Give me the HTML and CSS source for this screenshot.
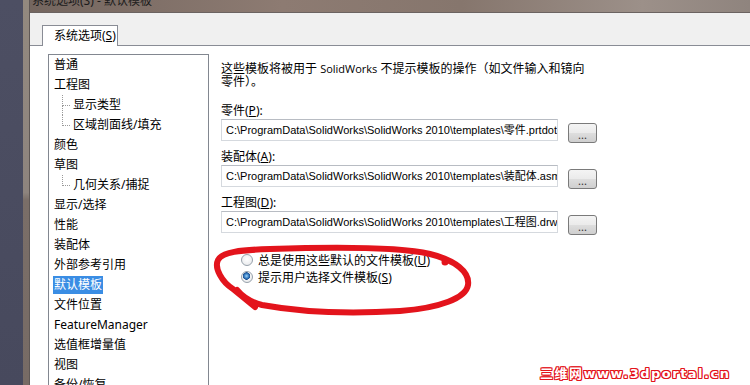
FILE: index.html
```html
<!DOCTYPE html>
<html>

<head>
    <link rel="stylesheet" href="styles.css">
</head>

<body>

    <div class="screen">
        <div class="desk"></div>
        <div class="frame"></div>

        <div class="window">
            <div class="titlebar"><span class="title">系统选项(S) - 默认模板</span></div>

            <div class="dialog">
                <div class="tabs">
                    <div class="tab">系统选项(<u>S</u>)</div>
                </div>

                <div class="panel">
                    <ul class="tree">
                        <li>普通</li>
                        <li>工程图</li>
                        <li class="sub more">显示类型</li>
                        <li class="sub">区域剖面线/填充</li>
                        <li>颜色</li>
                        <li>草图</li>
                        <li class="sub">几何关系/捕捉</li>
                        <li>显示/选择</li>
                        <li>性能</li>
                        <li>装配体</li>
                        <li>外部参考引用</li>
                        <li><span class="selected">默认模板</span></li>
                        <li>文件位置</li>
                        <li>FeatureManager</li>
                        <li>选值框增量值</li>
                        <li>视图</li>
                        <li>备份/恢复</li>
                    </ul>

                    <div class="content">
                        <p class="desc">这些模板将被用于 <span class="latin">SolidWorks</span> 不提示模板的操作（如文件输入和镜向<br>零件）。</p>

                        <div class="field first">
                            <div class="label">零件(<u>P</u>):</div>
                            <div class="row">
                                <div class="path">C:\ProgramData\SolidWorks\SolidWorks 2010\templates\零件.prtdot</div>
                                <button class="browse">...</button>
                            </div>
                        </div>
                        <div class="field">
                            <div class="label">装配体(<u>A</u>):</div>
                            <div class="row">
                                <div class="path">C:\ProgramData\SolidWorks\SolidWorks 2010\templates\装配体.asmdot</div>
                                <button class="browse">...</button>
                            </div>
                        </div>
                        <div class="field">
                            <div class="label">工程图(<u>D</u>):</div>
                            <div class="row">
                                <div class="path">C:\ProgramData\SolidWorks\SolidWorks 2010\templates\工程图.drwdot</div>
                                <button class="browse">...</button>
                            </div>
                        </div>

                        <div class="options">
                            <div class="option"><span class="radio"></span><span>总是使用这些默认的文件模板(<u>U</u>)</span></div>
                            <div class="option"><span class="radio checked"></span><span>提示用户选择文件模板(<u>S</u>)</span></div>
                        </div>
                    </div>
                </div>
            </div>
        </div>

        <svg class="scribble" width="750" height="385" viewBox="0 0 750 385">
            <path d="M 255 307 L 233 289 C 222 282, 214 268, 218 260 C 222 252, 240 250, 270 249 C 330 247, 400 247, 430 254 C 455 260, 470 272, 468 285 C 466 298, 440 308, 400 311 C 350 314, 300 312, 262 305 C 250 302, 242 296, 237 290"
                fill="none" stroke="#e3141c" stroke-width="6" stroke-linecap="round" stroke-linejoin="round" />
            <circle cx="445" cy="262" r="3.5" fill="#e3141c" />
        </svg>

        <div class="watermark">三维网www.3dportal.cn</div>
    </div>

</body>

</html>
```

FILE: styles.css
```css
body {
    margin: 0;
    font-family: "Noto Sans", "Noto Sans CJK SC", sans-serif;
    font-size: 12px;
    color: #000;
}

.screen {
    position: relative;
    display: flex;
    width: 750px;
    height: 385px;
    overflow: hidden;
}

.desk {
    width: 23px;
    background: linear-gradient(180deg, #4d4f63, #47495d);
}

.frame {
    width: 6px;
    background: linear-gradient(180deg, #93897f 0%, #8e847e 50%, #7a6e68 52%, #776b65 100%);
    border-right: 1px solid #5f5856;
}

.window {
    flex: 1;
    min-height: 0;
    display: flex;
    flex-direction: column;
    overflow: hidden;
}

.titlebar {
    flex: none;
    height: 12px;
    overflow: hidden;
    background: linear-gradient(90deg, #74665f, #8d7b72 35%, #86766d 60%, #9c9089 85%, #8f847e);
    border-bottom: 1px solid #6b6361;
}

.title {
    display: block;
    margin-top: -7px;
    padding-left: 2px;
    line-height: 16px;
    color: #1c1c1c;
}

.dialog {
    flex: 1;
    min-height: 0;
    display: flex;
    flex-direction: column;
    background-color: #f0f0f0;
    padding-top: 12px;
}

.tabs {
    flex: none;
    display: flex;
    padding-left: 12px;
}

.tab {
    position: relative;
    z-index: 1;
    width: 76px;
    height: 21px;
    margin-bottom: -1px;
    padding-left: 11px;
    box-sizing: border-box;
    line-height: 20px;
    background-color: #fff;
    border: 1px solid #898c95;
    border-bottom: none;
}

u {
    text-decoration: underline;
}

.panel {
    flex: 1;
    min-height: 0;
    display: flex;
    padding: 8px 0 0 18px;
    background-color: #fff;
    border-top: 1px solid #898c95;
}

.tree {
    flex: none;
    width: 161px;
    box-sizing: border-box;
    margin: 0;
    padding: 0;
    list-style-type: none;
    border: 1px solid #828790;
    border-bottom: none;
}

.tree li {
    position: relative;
    height: 20px;
    line-height: 20px;
    padding-left: 5px;
    white-space: nowrap;
}

.tree li.sub {
    padding-left: 24px;
}

.tree li.sub::before {
    content: "";
    position: absolute;
    left: 13px;
    top: 0;
    width: 7px;
    height: 10px;
    border-left: 1px dotted #9a9a9a;
    border-bottom: 1px dotted #9a9a9a;
}

.tree li.more::after {
    content: "";
    position: absolute;
    left: 13px;
    top: 10px;
    height: 10px;
    border-left: 1px dotted #9a9a9a;
}

.selected {
    display: inline-block;
    height: 18px;
    line-height: 18px;
    margin-left: -1px;
    padding: 0 1px;
    color: #fff;
    background-color: #3a8de4;
}

.content {
    margin-left: 12px;
    padding-top: 8px;
}

.desc {
    margin: 0;
    line-height: 13px;
}

.latin {
    font-family: "Open Sans", sans-serif;
    font-size: 11px;
}

.field {
    margin-top: 6px;
}

.field.first {
    margin-top: 15px;
}

.label {
    line-height: 16px;
}

.row {
    display: flex;
    align-items: flex-start;
}

.path {
    width: 337px;
    height: 22px;
    box-sizing: border-box;
    padding-left: 4px;
    line-height: 20px;
    font-family: "Liberation Sans", "Noto Sans CJK SC", sans-serif;
    font-size: 11px;
    white-space: nowrap;
    overflow: hidden;
    border: 1px solid #d5d9de;
    border-top-color: #b8bcc3;
}

.browse {
    width: 29px;
    height: 20px;
    margin: 4px 0 0 10px;
    padding: 4px 0 0;
    font-family: "Noto Sans", sans-serif;
    font-size: 11px;
    line-height: 12px;
    color: #333;
    border: 1px solid #7a7a7a;
    border-radius: 3px;
    background: linear-gradient(180deg, #f4f4f4 0%, #ebebeb 48%, #dddddd 52%, #cfcfcf 100%);
}

.options {
    margin-top: 16px;
    padding-left: 20px;
}

.option {
    display: flex;
    align-items: center;
    height: 17px;
    gap: 5px;
}

.radio {
    width: 12px;
    height: 12px;
    box-sizing: border-box;
    border-radius: 50%;
    border: 1px solid #97a1ab;
    background: radial-gradient(circle at 50% 40%, #ffffff, #e4e6e9);
}

.radio.checked {
    background: radial-gradient(circle at 45% 40%, #9fd0f5 0, #3f86c8 2px, #1a4f92 3.5px, #f4f4f4 4px, #dfe2e6 100%);
}

.scribble {
    position: absolute;
    left: 0;
    top: 0;
    pointer-events: none;
}

.watermark {
    position: absolute;
    left: 540px;
    top: 363px;
    font-family: "DejaVu Sans", "Noto Sans CJK SC", sans-serif;
    font-weight: bold;
    font-size: 13px;
    letter-spacing: 1.5px;
    color: #fff;
    text-shadow: 1px 0 #e3141c, -1px 0 #e3141c, 0 1px #e3141c, 0 -1px #e3141c,
        1px 1px #e3141c, -1px -1px #e3141c, 1px -1px #e3141c, -1px 1px #e3141c;
}
```
